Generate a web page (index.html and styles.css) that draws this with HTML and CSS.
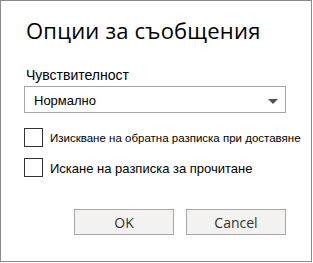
FILE: index.html
```html
<!DOCTYPE html>
<html lang="bg">
<head>
<meta charset="utf-8">
<link rel="stylesheet" href="styles.css">
</head>
<body>
<div class="dialog">
  <h1 class="title">Опции за съобщения</h1>
  <div class="field-label">Чувствителност</div>
  <div class="select">
    <span class="select-value">Нормално</span>
    <svg class="arrow" width="10" height="5" viewBox="0 0 10 5"><path d="M0 0H10L5 5Z" fill="#505050"/></svg>
  </div>
  <label class="check-row first">
    <span class="box"></span>
    <span class="check-text small">Изискване на обратна разписка при доставяне</span>
  </label>
  <label class="check-row second">
    <span class="box"></span>
    <span class="check-text">Искане на разписка за прочитане</span>
  </label>
  <div class="buttons">
    <button class="btn">OK</button>
    <button class="btn">Cancel</button>
  </div>
</div>
</body>
</html>
```
FILE: styles.css
```css
html, body {
  margin: 0;
  padding: 0;
  background: #ffffff;
}
body {
  font-family: "Liberation Sans", Arial, sans-serif;
  color: #000;
}
.dialog {
  width: 312px;
  height: 262px;
  box-sizing: border-box;
  border: 1px solid #8a8a8a;
  padding: 0 25px 0 23px;
  display: flex;
  flex-direction: column;
}
.title {
  margin: 14px 0 0 2px;
  font-family: "Open Sans", "Noto Sans", sans-serif;
  font-size: 22px;
  font-weight: normal;
  line-height: 30px;
  letter-spacing: 0.2px;
  white-space: nowrap;
}
.field-label {
  margin: 21px 0 2px 2px;
  font-size: 14px;
  line-height: 18px;
  white-space: nowrap;
}
.select {
  height: 27px;
  box-sizing: border-box;
  border: 1px solid #a6a6a6;
  display: flex;
  align-items: center;
  justify-content: space-between;
  padding: 3px 7px 0 9px;
}
.select-value {
  font-size: 13px;
  line-height: 16px;
}
.check-row {
  display: flex;
  align-items: center;
  gap: 7px;
  height: 19px;
}
.check-row.first { margin-top: 15px; }
.check-row.second { margin-top: 11px; }
.box {
  width: 19px;
  height: 19px;
  box-sizing: border-box;
  border: 1px solid #333;
  flex: none;
}
.check-text {
  font-size: 13px;
  line-height: 19px;
  white-space: nowrap;
  padding-top: 2px;
}
.check-text.small {
  font-size: 11.5px;
}
.buttons {
  margin-top: 32px;
  display: flex;
  justify-content: flex-end;
  gap: 12px;
}
.btn {
  width: 100px;
  height: 26px;
  box-sizing: border-box;
  border: 1px solid #a6a6a6;
  background: #f3f2f1;
  font-family: "Open Sans", "Noto Sans", sans-serif;
  font-size: 14px;
  color: #323130;
  padding: 0;
}
```
